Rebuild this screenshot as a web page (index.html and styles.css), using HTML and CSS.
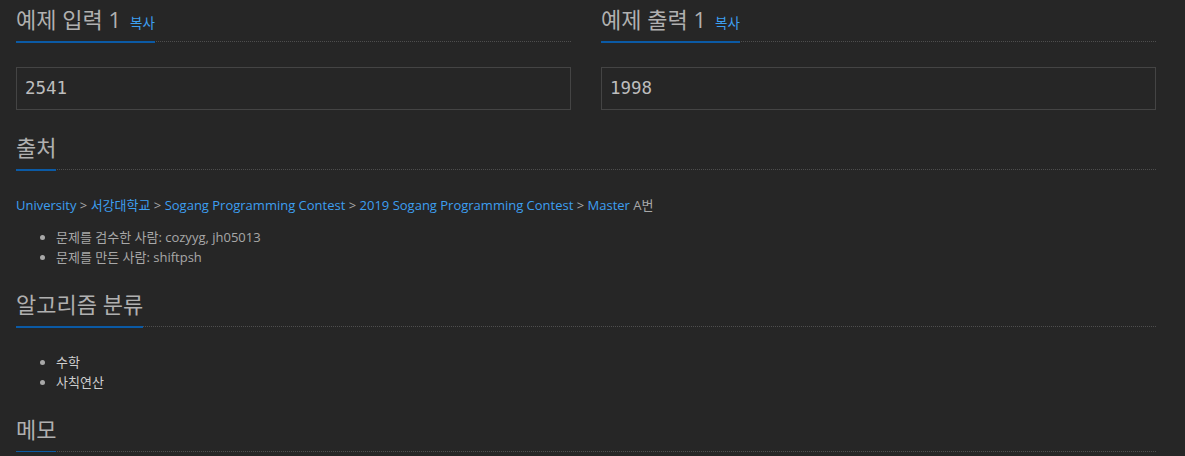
FILE: index.html
```html
<!DOCTYPE html>
<html lang="ko">
<head>
<meta charset="utf-8">
<title>문제</title>
<link rel="stylesheet" href="styles.css">
</head>
<body>
<div class="page">
  <div class="row">
    <section class="col">
      <div class="headline"><h2>예제 입력 1<button class="copy">복사</button></h2></div>
      <pre class="sample">2541</pre>
    </section>
    <section class="col">
      <div class="headline"><h2>예제 출력 1<button class="copy">복사</button></h2></div>
      <pre class="sample">1998</pre>
    </section>
  </div>
  <section class="sec">
    <div class="headline"><h2>출처</h2></div>
    <p class="source"><a href="#">University</a> &gt; <a href="#">서강대학교</a> &gt; <a href="#">Sogang Programming Contest</a> &gt; <a href="#">2019 Sogang Programming Contest</a> &gt; <a href="#">Master</a> A번</p>
    <ul class="info">
      <li>문제를 검수한 사람: cozyyg, jh05013</li>
      <li>문제를 만든 사람: shiftpsh</li>
    </ul>
  </section>
  <section class="sec">
    <div class="headline"><h2>알고리즘 분류</h2></div>
    <ul class="tags">
      <li><a href="#">수학</a></li>
      <li><a href="#">사칙연산</a></li>
    </ul>
  </section>
  <section class="sec last">
    <div class="headline"><h2>메모</h2></div>
  </section>
</div>
</body>
</html>
```

FILE: styles.css
```css
html, body {
  margin: 0;
  background: #262626;
  overflow: hidden;
}
body {
  font-family: "Open Sans", "Noto Sans CJK KR", sans-serif;
  font-size: 13px;
  color: #a8a8a8;
}
a {
  color: #3d9ff0;
  text-decoration: none;
}
.page {
  width: 1140px;
  padding: 10px 0 0 16px;
}
.row {
  display: grid;
  grid-template-columns: 1fr 1fr;
  column-gap: 30px;
  margin-bottom: 28px;
}
.headline {
  display: flex;
  align-items: flex-end;
  border-bottom: 1px dotted #4e4e4e;
}
.headline h2 {
  margin: 0 0 -2px;
  padding: 0 0 10px;
  height: 21px;
  font-size: 22px;
  font-weight: normal;
  line-height: 18px;
  color: #b0b0b0;
  border-bottom: 2px solid #0b5aa5;
}
.copy {
  margin-left: 9px;
  padding: 0;
  border: 0;
  background: none;
  font-family: "Open Sans", "Noto Sans CJK KR", sans-serif;
  font-size: 13.5px;
  line-height: 1;
  color: #3d9ff0;
  cursor: pointer;
}
.sample {
  margin: 25px 0 0;
  padding: 9px 8px;
  border: 1px solid #444;
  background: transparent;
  font-family: "DejaVu Sans Mono", monospace;
  font-size: 17.5px;
  line-height: 23px;
  color: #bdbdbd;
}
.sec {
  margin-bottom: 28px;
}
.sec.last {
  margin-bottom: 0;
}
.source {
  margin: 25px 0 12px;
  line-height: 20px;
}
.info, .tags {
  margin: 0;
  padding-left: 40px;
  line-height: 20px;
}
.tags {
  margin-top: 25px;
}
.tags a {
  color: #cfcfcf;
}
```
